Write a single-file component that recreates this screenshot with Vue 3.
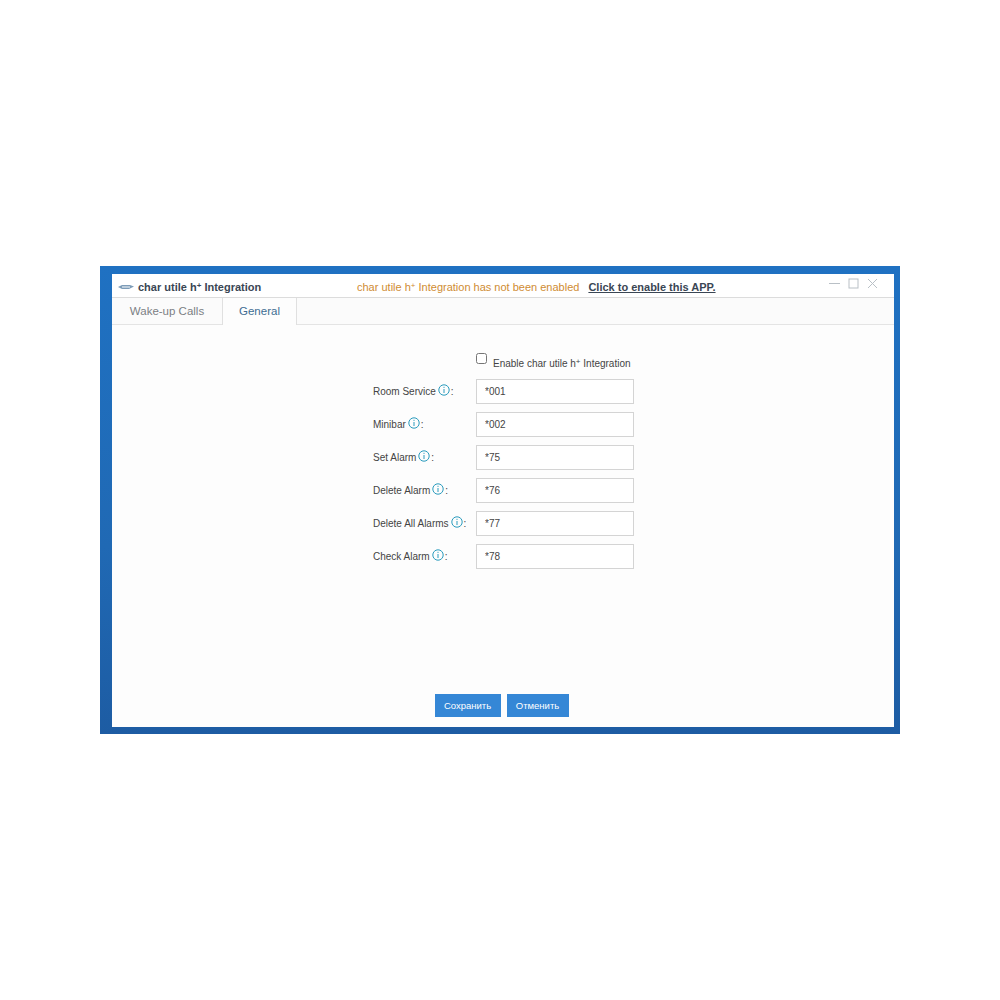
<template>
  <div class="page">
    <div class="desktop">
      <div class="window">
        <!-- Title bar -->
        <div class="titlebar">
          <div class="app-title">
            <svg class="logo" width="16" height="6" viewBox="0 0 16 6">
              <path d="M0 3 L4 1 L12 1 L16 2.5 L11 5 L4 5 Z" fill="#7d9cb8" />
              <path d="M4 3 H12" stroke="#fff" stroke-width="1" />
            </svg>
            <span>char utile h<sup>+</sup> Integration</span>
          </div>
          <div class="notice">
            <span class="notice-text">char utile h<sup>+</sup> Integration has not been enabled</span>
            <a class="enable-link">Click to enable this APP.</a>
          </div>
          <div class="win-controls">
            <svg width="11" height="11" viewBox="0 0 11 11"><path d="M0 5.5 H11" /></svg>
            <svg width="11" height="11" viewBox="0 0 11 11"><rect x="1" y="1" width="9" height="9" /></svg>
            <svg width="11" height="11" viewBox="0 0 11 11"><path d="M1 1 L10 10 M10 1 L1 10" /></svg>
          </div>
        </div>

        <!-- Tabs -->
        <div class="tabs">
          <div class="tab">Wake-up Calls</div>
          <div class="tab active">General</div>
        </div>

        <!-- Form -->
        <div class="content">
          <div class="enable-row">
            <input type="checkbox" class="checkbox">
            <span>Enable char utile h<sup>+</sup> Integration</span>
          </div>
          <div v-for="field in fields" :key="field.label" class="form-row">
            <label class="field-label">
              {{ field.label }}
              <svg class="info" width="12" height="12" viewBox="0 0 12 12">
                <circle cx="6" cy="6" r="5.2" />
                <path d="M6 2.8 V3.9 M6 5 V9" />
              </svg><span class="colon">:</span>
            </label>
            <input class="field-input" type="text" :value="field.value">
          </div>
        </div>

        <!-- Footer -->
        <div class="footer">
          <button class="btn save">Сохранить</button>
          <button class="btn">Отменить</button>
        </div>
      </div>
    </div>
  </div>
</template>

<script setup>
const fields = [
  { label: 'Room Service', value: '*001' },
  { label: 'Minibar', value: '*002' },
  { label: 'Set Alarm', value: '*75' },
  { label: 'Delete Alarm', value: '*76' },
  { label: 'Delete All Alarms', value: '*77' },
  { label: 'Check Alarm', value: '*78' }
]
</script>

<style>
body {
  background: #fff;
}
</style>

<style scoped>
.page {
  height: 1000px;
  padding-top: 266px;
  box-sizing: border-box;
  font-family: "Liberation Sans", Arial, sans-serif;
}

.desktop {
  width: 800px;
  height: 468px;
  margin: 0 auto;
  padding: 8px 6px 7px 12px;
  box-sizing: border-box;
  background: linear-gradient(180deg, #1f71c2 0%, #2069b4 60%, #1d5ca3 100%);
}

.window {
  height: 100%;
  display: flex;
  flex-direction: column;
  background: #fdfdfd;
}

.titlebar {
  height: 24px;
  flex: none;
  display: flex;
  align-items: flex-end;
  box-sizing: border-box;
  padding: 0 16px 0 6px;
  border-bottom: 1px solid #dcdcdc;
  background: #fff;
}

.app-title {
  display: flex;
  align-items: center;
  gap: 4px;
  width: 239px;
  height: 21px;
  font-size: 11px;
  font-weight: 700;
  color: #3a4654;
  white-space: nowrap;
}

.logo {
  flex: none;
}

sup {
  font-size: 8px;
  line-height: 0;
  vertical-align: 3px;
}

.notice {
  display: flex;
  gap: 9px;
  height: 21px;
  align-items: center;
  font-size: 11px;
  white-space: nowrap;
}

.notice-text {
  color: #cf8c33;
}

.enable-link {
  color: #3a4654;
  font-weight: 700;
  text-decoration: underline;
}

.win-controls {
  margin-left: auto;
  height: 21px;
  display: flex;
  align-items: flex-start;
  gap: 8px;
  padding-top: 2px;
  box-sizing: border-box;
}

.win-controls svg {
  fill: none;
  stroke: #b9c0c6;
  stroke-width: 1;
}

.tabs {
  height: 27px;
  flex: none;
  display: flex;
  box-sizing: border-box;
  border-bottom: 1px solid #e4e4e4;
  background: #fbfbfb;
}

.tab {
  width: 110px;
  height: 26px;
  box-sizing: border-box;
  text-align: center;
  line-height: 26px;
  font-size: 11.5px;
  color: #7b7f84;
}

.tab.active {
  width: 75px;
  height: 27px;
  background: #fdfdfd;
  color: #3d6d93;
  border-left: 1px solid #e0e0e0;
  border-right: 1px solid #e0e0e0;
}

.content {
  flex: 1;
  padding: 25px 0 0 261px;
}

.enable-row {
  display: flex;
  align-items: flex-end;
  height: 19px;
  padding-left: 103px;
  margin-bottom: 10px;
  font-size: 10px;
  color: #444;
  white-space: nowrap;
}

.checkbox {
  width: 11px;
  height: 11px;
  margin: 0 6px 5px 0;
}

.form-row {
  display: flex;
  align-items: center;
  height: 25px;
  margin-bottom: 8px;
}

.field-label {
  display: flex;
  align-items: center;
  width: 103px;
  font-size: 10px;
  color: #444;
  white-space: nowrap;
}

.info {
  margin: -3px 0 0 2px;
  fill: none;
  stroke: #2a9bbd;
  stroke-width: 1;
}

.colon {
  margin-left: 1px;
}

.field-input {
  width: 158px;
  height: 25px;
  box-sizing: border-box;
  padding: 0 8px;
  border: 1px solid #d4d4d4;
  border-radius: 0;
  background: #fff;
  font-family: inherit;
  font-size: 10px;
  color: #444;
  outline: none;
}

.footer {
  display: flex;
  justify-content: center;
  gap: 6px;
  padding: 0 0 10px 0;
  margin-left: -3px;
}

.btn {
  width: 62px;
  height: 23px;
  padding: 0;
  border: none;
  background: #3587d6;
  color: #fff;
  font-family: inherit;
  font-size: 9.5px;
}

.btn.save {
  width: 66px;
}
</style>
